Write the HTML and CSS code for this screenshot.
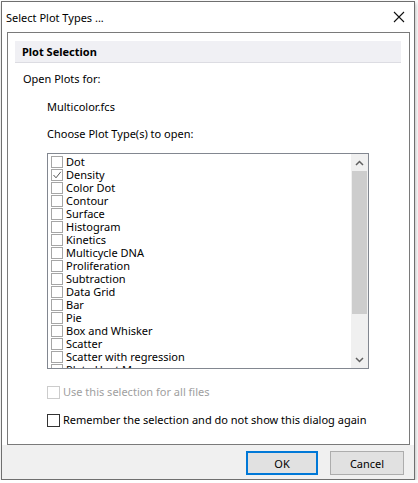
FILE: index.html
```html
<!DOCTYPE html>
<html>
<head>
    <meta charset="UTF-8">
    <title>Select Plot Types ...</title>
    <link rel="stylesheet" href="styles.css">
</head>
<body>
    <div class="window">
        <div class="titlebar">
            <span class="title">Select Plot Types ...</span>
            <svg class="close" width="12" height="12" viewBox="0 0 12 12">
                <path d="M1 1 L11 11 M11 1 L1 11" stroke="#111" stroke-width="1.1" fill="none" />
            </svg>
        </div>
        <div class="panel">
            <div class="section-head">Plot Selection</div>
            <div class="line open-for">Open Plots for:</div>
            <div class="line indent file">Multicolor.fcs</div>
            <div class="line indent choose">Choose Plot Type(s) to open:</div>
            <div class="listbox">
                <div class="items">
                    <div class="item"><span class="box"></span>Dot</div>
                    <div class="item"><span class="box">
                        <svg width="10" height="10" viewBox="0 0 10 10"><path d="M1.5 5 L4 7.8 L8.8 1.8" stroke="#555" stroke-width="1" fill="none" /></svg>
                    </span>Density</div>
                    <div class="item"><span class="box"></span>Color Dot</div>
                    <div class="item"><span class="box"></span>Contour</div>
                    <div class="item"><span class="box"></span>Surface</div>
                    <div class="item"><span class="box"></span>Histogram</div>
                    <div class="item"><span class="box"></span>Kinetics</div>
                    <div class="item"><span class="box"></span>Multicycle DNA</div>
                    <div class="item"><span class="box"></span>Proliferation</div>
                    <div class="item"><span class="box"></span>Subtraction</div>
                    <div class="item"><span class="box"></span>Data Grid</div>
                    <div class="item"><span class="box"></span>Bar</div>
                    <div class="item"><span class="box"></span>Pie</div>
                    <div class="item"><span class="box"></span>Box and Whisker</div>
                    <div class="item"><span class="box"></span>Scatter</div>
                    <div class="item"><span class="box"></span>Scatter with regression</div>
                    <div class="item"><span class="box"></span>Plate Heat Map</div>
                </div>
                <div class="scrollbar">
                    <div class="arrow">
                        <svg width="9" height="6" viewBox="0 0 9 6"><path d="M1 5 L4.5 1.5 L8 5" stroke="#606060" stroke-width="1.5" fill="none" /></svg>
                    </div>
                    <div class="track">
                        <div class="thumb"></div>
                    </div>
                    <div class="arrow">
                        <svg width="9" height="6" viewBox="0 0 9 6"><path d="M1 1 L4.5 4.5 L8 1" stroke="#606060" stroke-width="1.5" fill="none" /></svg>
                    </div>
                </div>
            </div>
            <div class="line check-line disabled use-all"><span class="cb"></span>Use this selection for all files</div>
            <div class="line check-line remember"><span class="cb"></span>Remember the selection and do not show this dialog again</div>
        </div>
        <div class="footer">
            <button class="btn default">OK</button>
            <button class="btn">Cancel</button>
        </div>
    </div>
</body>
</html>
```

FILE: styles.css
```css
* {
    box-sizing: border-box;
    margin: 0;
    padding: 0;
    font-family: 'Noto Sans', 'Open Sans', Arial, sans-serif;
}

body {
    background: #fff;
    font-size: 11px;
    color: #000;
}

.window {
    margin: 1px 0 0 1px;
    width: 414px;
    height: 479px;
    border: 1px solid #6f6f6f;
    background: #fff;
    display: flex;
    flex-direction: column;
    box-shadow: 1px 2px 4px rgba(0, 0, 0, 0.25);
}

.titlebar {
    height: 30px;
    display: flex;
    align-items: center;
    justify-content: space-between;
    padding: 0 9px 0 4px;
}

.title {
    font-size: 11px;
    color: #000;
}

.panel {
    margin: 0 4px 0 5px;
    height: 413px;
    border: 1px solid #7a7a7a;
    background: #fff;
    display: flex;
    flex-direction: column;
}

.section-head {
    margin: 8px 8px 0 7px;
    height: 22px;
    background: #f0f0f4;
    border-bottom: 1px solid #dcdce2;
    font-weight: bold;
    padding-left: 7px;
    line-height: 21px;
}

.line {
    line-height: 16px;
    height: 16px;
    white-space: nowrap;
}

.open-for {
    margin: 8px 0 0 15px;
}

.indent {
    margin-left: 39px;
}

.file {
    margin-top: 12px;
}

.choose {
    margin-top: 11px;
}

.listbox {
    margin: 11px 0 0 39px;
    width: 322px;
    height: 216px;
    border: 1px solid #828790;
    display: flex;
    overflow: hidden;
}

.items {
    flex: 1;
    padding-top: 1px;
    overflow: hidden;
}

.item {
    height: 13px;
    line-height: 13px;
    display: flex;
    align-items: center;
    white-space: nowrap;
    color: #000;
}

.box {
    width: 12px;
    height: 12px;
    border: 1px solid #a6a6a6;
    margin: 0 3px 0 3px;
    display: flex;
    align-items: center;
    justify-content: center;
    background: #fff;
}

.scrollbar {
    width: 17px;
    background: #f0f0f0;
    display: flex;
    flex-direction: column;
}

.arrow {
    height: 17px;
    display: flex;
    align-items: center;
    justify-content: center;
}

.track {
    flex: 1;
}

.thumb {
    height: 143px;
    background: #cdcdcd;
    margin: 0 1px;
}

.check-line {
    margin-left: 39px;
    display: flex;
    align-items: center;
}

.cb {
    width: 13px;
    height: 13px;
    border: 1px solid #333;
    margin-right: 3px;
    background: #fff;
}

.use-all {
    margin-top: 15px;
    color: #a0a0a0;
}

.use-all .cb {
    border-color: #cccccc;
}

.remember {
    margin-top: 12px;
}

.footer {
    flex: 1;
    background: #f0f0f0;
    display: flex;
    justify-content: flex-end;
    align-items: flex-start;
    padding: 6px 10px 0 0;
    gap: 12px;
}

.btn {
    width: 74px;
    height: 24px;
    background: #e1e1e1;
    border: 1px solid #adadad;
    font-size: 11px;
    color: #000;
}

.btn.default {
    width: 72px;
    border: 2px solid #0078d7;
}
```
